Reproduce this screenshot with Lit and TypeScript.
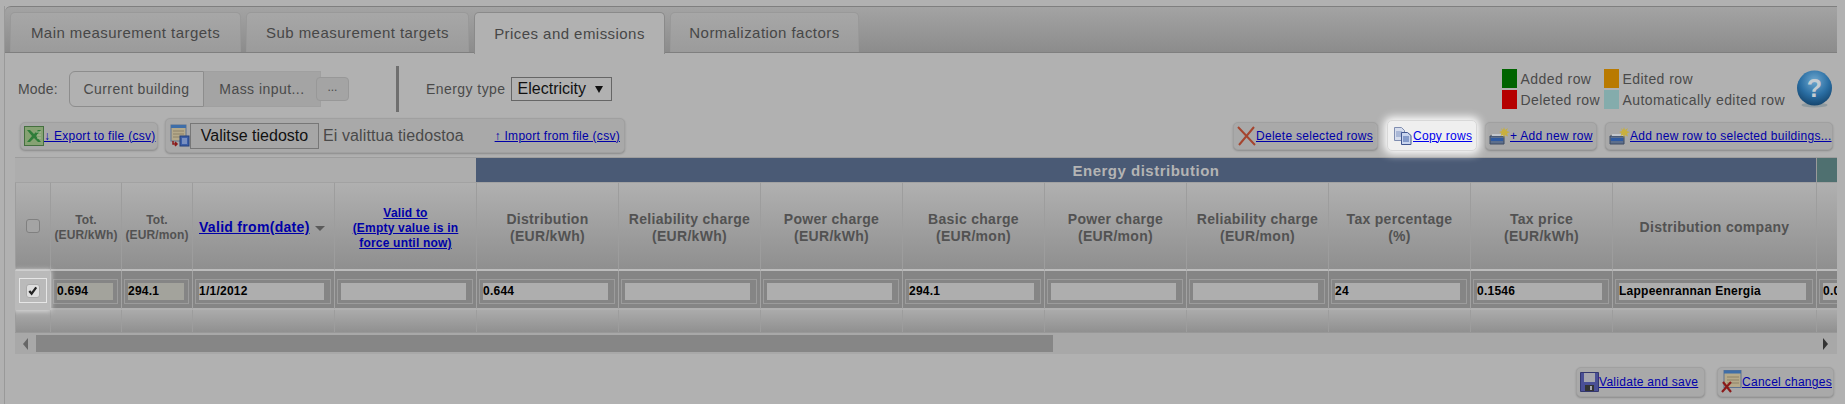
import { LitElement, html, css } from "lit";
import { customElement } from "lit/decorators.js";

const tabs = [
  { label: "Main measurement targets", w: 231, active: false },
  { label: "Sub measurement targets", w: 223, active: false },
  { label: "Prices and emissions", w: 191, active: true },
  { label: "Normalization factors", w: 189, active: false },
];

const heads: [string, string, string][] = [
  ["Distribution", "(EUR/kWh)", "0.644"],
  ["Reliability charge", "(EUR/kWh)", ""],
  ["Power charge", "(EUR/kWh)", ""],
  ["Basic charge", "(EUR/mon)", "294.1"],
  ["Power charge", "(EUR/mon)", ""],
  ["Reliability charge", "(EUR/mon)", ""],
  ["Tax percentage", "(%)", "24"],
  ["Tax price", "(EUR/kWh)", "0.1546"],
  ["Distribution company", "", "Lappeenrannan Energia"],
];

const excel = html`<svg width="20" height="20" viewBox="0 0 20 20"><rect x=".5" y=".5" width="19" height="19" fill="#86a273" stroke="#44703f"/><path d="M3 4h3l4 4 4-4h3l-5 6 5 6h-3l-4-4-4 4H3l5-6z" fill="#2f7d3a"/><path d="M12 6h5M13 9h4M13 12h4" stroke="#a9bf9a"/></svg>`;
const importIcon = html`<svg width="20" height="24" viewBox="0 0 20 24"><rect x="1" y="1" width="15" height="16" fill="#b5a98a" stroke="#5f7290"/><rect x="1" y="1" width="15" height="3" fill="#3f6ea8"/><path d="M3 7h11M3 10h11M3 13h8" stroke="#8d8268"/><path d="M3 17v3h4m-2-2 2 2-2 2" fill="none" stroke="#8b1a1a" stroke-width="1.5"/><rect x="10" y="12" width="9" height="10" fill="#3c5fa8" stroke="#24407a"/><path d="M12 15h5M12 17h5M12 19h5" stroke="#b4c0d8"/></svg>`;
const delIcon = html`<svg width="19" height="20" viewBox="0 0 19 20"><path d="M1 1l17 18M17 1L2 19" stroke="#a5452f" stroke-width="2" fill="none"/></svg>`;
const copyIcon = html`<svg width="20" height="20" viewBox="0 0 20 20"><path d="M1.500 1.500h7l3 3v10h-10z" fill="#d5dcec" stroke="#7f8db0"/><path d="M3 6h6M3 8h6M3 10h5" stroke="#7f93c0"/><path d="M8.500 6.500h6l3.500 3v9h-9.500z" fill="#c9d5ee" stroke="#41568f"/><path d="M10 11h6M10 13h6M10 15h6" stroke="#4262a8"/></svg>`;
const addIcon = html`<svg width="21" height="18" viewBox="0 0 21 18"><path d="M1 9h14v8H1z" fill="#5d6f8c" stroke="#3d4a63"/><path d="M2 11h12v3H2z" fill="#2f5aa0"/><path d="M3 7h12v2H3z" fill="#c3c7cc"/><path d="M15 0l1 3 3-2-1.500 3L21 5l-3 1.500L19 9.500 16 8l-1 3-1-3-2.500 1 1-3L10 5l3-1-1-3 2 2z" fill="#c8b040"/></svg>`;
const saveIcon = html`<svg width="19" height="20" viewBox="0 0 19 20"><path d="M.5.5h18v19h-18z" fill="#4a4f96" stroke="#33376e"/><rect x="4" y="1" width="11" height="9" fill="#a6a6ae"/><rect x="5" y="13" width="9" height="6" fill="#333"/><rect x="10" y="14" width="2" height="4" fill="#a6a6ae"/></svg>`;
const cancelIcon = html`<svg width="21" height="24" viewBox="0 0 21 24"><rect x="3" y=".5" width="17" height="17" fill="#b5a98a" stroke="#5f7290"/><rect x="3" y=".5" width="17" height="3" fill="#3f6ea8"/><path d="M6 7h12M6 10h12M6 13h12" stroke="#8d8268"/><path d="M1 22L10 12M2 12l8 10" stroke="#8b1a1a" stroke-width="2.200" fill="none"/></svg>`;
const helpIcon = html`<svg width="37" height="38" viewBox="0 0 37 38"><defs><radialGradient id="hg" cx=".5" cy=".3" r=".75"><stop offset="0" stop-color="#6fa8cf"/><stop offset=".55" stop-color="#2a6ea3"/><stop offset="1" stop-color="#123f66"/></radialGradient></defs><ellipse cx="18.500" cy="35" rx="13" ry="2.500" fill="#8f9a9f"/><circle cx="18.500" cy="18" r="17.500" fill="url(#hg)"/><text x="18.500" y="27" text-anchor="middle" class="q">?</text></svg>`;
const check = html`<svg width="13" height="13" viewBox="0 0 13 13"><path d="M2.500 7l2.500 3 5-7" fill="none" stroke="#222" stroke-width="2.400"/></svg>`;

@customElement("app-root")
export class AppRoot extends LitElement {
  static styles = css`
    :host { display: block; width: 1845px; height: 404px; overflow: hidden; background: #b1b1b1; font-family: "Liberation Sans", Arial, sans-serif; color: #4a4a4a; }
    .frame { margin: 6px 8px 0 4px; border-left: 1px solid #999; height: 398px; }
    .strip { display: flex; gap: 5px; height: 47px; box-sizing: border-box; padding: 5px 0 0 5px; border-top: 1px solid #7f7f7f; border-bottom: 1px solid #7f7f7f; border-top-left-radius: 6px; background: linear-gradient(#a3a3a3, #8c8c8c); }
    .tab { box-sizing: border-box; height: 40px; display: flex; align-items: center; justify-content: center; font-size: 15px; letter-spacing: .45px; border: 1px solid #999; border-bottom: 0; border-radius: 5px 5px 0 0; background: linear-gradient(#a7a7a7, #9b9b9b); color: #474747; }
    .tab.active { height: 42px; background: #b1b1b1; border-color: #8a8a8a; }
    .body { padding-left: 10px; }
    .row1 { display: flex; align-items: center; height: 46px; margin-top: 13px; font-size: 14px; }
    .mode { margin: 0 11px 0 3px; letter-spacing: .2px; }
    .seg { box-sizing: border-box; height: 36px; display: flex; align-items: center; justify-content: center; letter-spacing: .45px; }
    .seg.a { width: 135px; border: 1px solid #8d8d8d; border-radius: 6px 0 0 6px; }
    .seg.b { width: 117px; background: #a4a4a4; border: 1px solid #a0a0a0; border-left: 0; }
    .dots { box-sizing: border-box; width: 33px; height: 24px; margin-left: -5px; text-align: center; line-height: 18px; font-size: 12px; background: #a4a4a4; border: 1px solid #989898; border-radius: 4px; }
    .sep { width: 3px; height: 46px; background: #6f6f6f; margin: 0 27px 0 47px; }
    .etype { margin-right: 5px; letter-spacing: .45px; }
    .select { box-sizing: border-box; width: 101px; height: 24px; border: 1px solid #666; display: flex; align-items: center; justify-content: space-between; padding: 0 8px 0 6px; font-size: 16px; color: #111; }
    .arrow { width: 0; height: 0; border-left: 4px solid transparent; border-right: 4px solid transparent; border-top: 7px solid #111; }
    .legend { margin-left: auto; display: grid; grid-template-columns: 15px 87px 15px auto; grid-auto-rows: 20px; row-gap: 1px; align-items: center; letter-spacing: .45px; column-gap: 0; }
    .legend span.t { padding-left: 3px; white-space: nowrap; }
    .sw { height: 19px; }
    .help { margin: 0 4px 0 11px; height: 38px; }
    .q { font: bold 25px "Liberation Sans", sans-serif; fill: #c4ccd2; }
    .row2 { display: flex; align-items: center; height: 35px; margin-top: 6px; padding-right: 4px; }
    .btn { box-sizing: border-box; height: 28px; display: flex; align-items: center; border: 1px solid #a0a0a0; border-radius: 5px; background: #a9a9a9; box-shadow: 0 1px 2px rgba(0,0,0,.22); font-size: 12px; white-space: nowrap; padding: 0 3px; }
    .btn svg { flex: none; }
    a { color: #0000a8; text-decoration: underline; letter-spacing: .28px; }
    .export { width: 138px; margin-left: 5px; }
    .import { box-sizing: border-box; width: 460px; height: 35px; margin-left: 7px; padding: 0 4px; }
    .file { box-sizing: border-box; width: 129px; height: 26px; margin-left: 0; border: 1px solid #777; background: #a6a6a6; color: #111; font-size: 16px; text-align: center; line-height: 24px; }
    .none { margin-left: 4px; font-size: 16px; letter-spacing: .1px; color: #4a4a4a; }
    .import a { margin-left: auto; }
    .right { margin-left: auto; display: flex; align-items: center; gap: 8px; }
    .copy { position: relative; z-index: 2; width: 90px; height: 31px; background: #efefef; border-color: #d8d8d8; box-shadow: 0 0 8px 3px #fff; margin-left: 1px; padding-left: 5px; }
    .copy a { color: #0000ee; }
    .del { width: 145px; } .add { width: 112px; } .adds { width: 228px; }
    .table { margin-top: 4px; width: 1822px; overflow: hidden; border-top: 1px solid #9d9d9d; box-sizing: border-box; display: grid; grid-template-columns: 35px 71px 71px repeat(10, 142px) 204px 142px; grid-template-rows: 24px 89px 39px 22px; }
    .g0 { grid-column: 1 / 6; background: #adadad; }
    .g1 { grid-column: 6 / 15; background: #4a5a75; color: #b4b4b4; font-weight: bold; font-size: 15px; letter-spacing: .5px; display: flex; align-items: center; justify-content: center; }
    .g2 { background: #4f7070; border-left: 1px solid #9a9a9a; }
    .h { box-sizing: border-box; background: linear-gradient(#b0b0b0, #8f8f8f); border-left: 1px solid #9d9d9d; border-top: 1px solid #a2a2a2; border-bottom: 2px solid #bcbcbc; display: flex; flex-direction: column; align-items: center; justify-content: center; text-align: center; font-weight: bold; font-size: 14px; line-height: 17px; color: #525252; letter-spacing: .3px; white-space: nowrap; padding-top: 3px; }
    .h.small { font-size: 12px; line-height: 15px; letter-spacing: .12px; padding-top: 4px; }
    .h.small a { letter-spacing: .2px; }
    .h a { letter-spacing: .3px; }
    .sortrow { flex-direction: row; justify-content: flex-start; padding-left: 6px; }
    .caret { width: 0; height: 0; margin: 2px 0 0 5px; border-left: 5px solid transparent; border-right: 5px solid transparent; border-top: 5px solid #5a5a5a; }
    .cb { box-sizing: border-box; width: 14px; height: 14px; border: 1px solid #808080; border-radius: 3px; background: #a4a4a4; margin-top: -3px; }
    .d { box-sizing: border-box; background: #858585; border-left: 1px solid #a2a2a2; border-bottom: 2px solid #b0b0b0; padding: 8px 3px 3px 2px; }
    .fr { box-sizing: border-box; height: 25px; border: 1px solid #9c9c9c; padding: 3px 6px 3px 3px; }
    .fr.n { padding-right: 4px; }
    .in { box-sizing: border-box; height: 17px; background: #aeaeae; color: #000; font-size: 12px; font-weight: bold; line-height: 17px; letter-spacing: .25px; white-space: nowrap; overflow: hidden; }
    .in.ro { background: #a3a39c; }
    .chk { position: relative; z-index: 2; box-sizing: border-box; background: #bababa; box-shadow: 0 0 5px 1px #ddd; padding: 7px 3px 7px 4px; }
    .chkin { box-sizing: border-box; height: 25px; border: 1px solid #e6e6e6; display: flex; align-items: center; justify-content: center; }
    .cb2 { box-sizing: border-box; width: 14px; height: 14px; border-radius: 3px; background: #dedede; border: 1px solid #aaa; display: flex; align-items: center; justify-content: center; }
    .e { background: linear-gradient(#ababab, #909090); border-left: 1px solid #9d9d9d; }
    .bar { width: 1822px; height: 22px; background: #a8a8a8; box-sizing: border-box; padding: 2px 0 2px 21px; display: flex; align-items: center; position: relative; border-top: 1px solid #989898; }
    .thumb { width: 1017px; height: 17px; background: #868686; }
    .tri { flex: none; width: 0; height: 0; border-top: 6px solid transparent; border-bottom: 6px solid transparent; }
    .tri.l { border-right: 5px solid #666; margin-left: -13px; margin-right: 8px; }
    .tri.r { border-left: 5px solid #333; margin-left: auto; margin-right: 9px; }
    .foot { display: flex; justify-content: flex-end; align-items: center; gap: 12px; margin-top: 13px; padding-right: 4px; width: 1823px; box-sizing: border-box; }
    .foot .btn { height: 30px; }
    .val { width: 129px; } .can { width: 117px; }
  `;

  render() {
    return html`<div class="frame">
      <div class="strip">
        ${tabs.map((t) => html`<div class="tab ${t.active ? "active" : ""}" style="width:${t.w}px">${t.label}</div>`)}
      </div>
      <div class="body">
        <div class="row1">
          <span class="mode">Mode:</span>
          <div class="seg a">Current building</div>
          <div class="seg b">Mass input...</div>
          <div class="dots">...</div>
          <div class="sep"></div>
          <span class="etype">Energy type</span>
          <div class="select">Electricity<span class="arrow"></span></div>
          <div class="legend">
            <span class="sw" style="background:#006400"></span><span class="t">Added row</span>
            <span class="sw" style="background:#b97a00"></span><span class="t">Edited row</span>
            <span class="sw" style="background:#b50000"></span><span class="t">Deleted row</span>
            <span class="sw" style="background:#84acac"></span><span class="t">Automatically edited row</span>
          </div>
          <div class="help">${helpIcon}</div>
        </div>
        <div class="row2">
          <div class="btn export">${excel}<a>↓ Export to file (csv)</a></div>
          <div class="btn import">${importIcon}<div class="file">Valitse tiedosto</div><span class="none">Ei valittua tiedostoa</span><a>↑ Import from file (csv)</a></div>
          <div class="right">
            <div class="btn del">${delIcon}<a>Delete selected rows</a></div>
            <div class="btn copy">${copyIcon}<a>Copy rows</a></div>
            <div class="btn add">${addIcon}<a>+ Add new row</a></div>
            <div class="btn adds">${addIcon}<a>Add new row to selected buildings...</a></div>
          </div>
        </div>
        <div class="table">
          <div class="g0"></div>
          <div class="g1">Energy distribution</div>
          <div class="g2"></div>

          <div class="h"><span class="cb"></span></div>
          <div class="h small"><span>Tot.</span><span>(EUR/kWh)</span></div>
          <div class="h small"><span>Tot.</span><span>(EUR/mon)</span></div>
          <div class="h sortrow"><a>Valid from(date) </a><span class="caret"></span></div>
          <div class="h small"><a>Valid to </a><a>(Empty value is in</a><a>force until now)</a></div>
          ${heads.map((h) => html`<div class="h"><span>${h[0]}</span>${h[1] ? html`<span>${h[1]}</span>` : ""}</div>`)}
          <div class="h"></div>

          <div class="chk"><div class="chkin"><span class="cb2">${check}</span></div></div>
          <div class="d"><div class="fr n"><div class="in ro">0.694</div></div></div>
          <div class="d"><div class="fr n"><div class="in ro">294.1</div></div></div>
          <div class="d"><div class="fr"><div class="in">1/1/2012</div></div></div>
          <div class="d"><div class="fr"><div class="in"></div></div></div>
          ${heads.map((h) => html`<div class="d"><div class="fr"><div class="in">${h[2]}</div></div></div>`)}
          <div class="d"><div class="fr"><div class="in">0.0</div></div></div>

          ${Array.from({ length: 15 }).map(() => html`<div class="e"></div>`)}
        </div>
        <div class="bar"><span class="tri l"></span><div class="thumb"></div><span class="tri r"></span></div>
        <div class="foot">
          <div class="btn val">${saveIcon}<a>Validate and save</a></div>
          <div class="btn can">${cancelIcon}<a>Cancel changes</a></div>
        </div>
      </div>
    </div>`;
  }
}
